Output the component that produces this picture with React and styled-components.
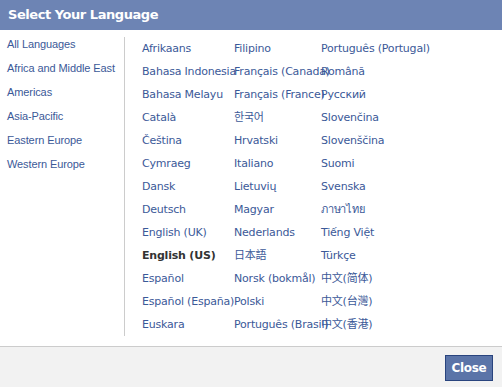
import React from "react";
import styled, { createGlobalStyle } from "styled-components";

const GlobalStyle = createGlobalStyle`
  html, body {
    margin: 0;
    padding: 0;
    background: #ffffff;
  }
  body {
    font-family: "Liberation Sans", Arial, sans-serif;
  }
`;

const Dialog = styled.div`
  width: 502px;
  height: 387px;
  display: flex;
  flex-direction: column;
  background: #ffffff;
  overflow: hidden;
`;

const Header = styled.div`
  height: 30px;
  background: #6d84b4;
  color: #ffffff;
  font-family: "DejaVu Sans", Verdana, sans-serif;
  font-weight: bold;
  font-size: 13px;
  line-height: 30px;
  padding-left: 8px;
  letter-spacing: -0.45px;
`;

const Body = styled.div`
  flex: 1;
  display: flex;
  padding-bottom: 9px;
`;

const Sidebar = styled.ul`
  list-style: none;
  margin: 0;
  padding: 2px 0 0 7px;
  width: 117px;
`;

const RegionItem = styled.li`
  font-size: 11px;
  line-height: 24px;
  color: #3b5998;
  white-space: nowrap;
  letter-spacing: -0.1px;
`;

const LanguageGrid = styled.div`
  margin-top: 7px;
  height: 299px;
  border-left: 1px solid #cccccc;
  padding-left: 17px;
  display: grid;
  grid-template-rows: repeat(13, 23px);
  grid-template-columns: 92px 87px 1fr;
  grid-auto-flow: column;
`;

const Language = styled.div`
  font-family: "DejaVu Sans", Verdana, "Noto Sans CJK SC", sans-serif;
  font-size: 11px;
  line-height: 23px;
  letter-spacing: -0.2px;
  white-space: nowrap;
  color: ${(p) => (p.$current ? "#333333" : "#3b5998")};
  font-weight: ${(p) => (p.$current ? "bold" : "normal")};
`;

const Footer = styled.div`
  height: 41px;
  border-top: 1px solid #cccccc;
  background: #f2f2f2;
  display: flex;
  justify-content: flex-end;
  align-items: flex-start;
  padding: 8px 9px 0 0;
  box-sizing: border-box;
`;

const CloseButton = styled.button`
  width: 48px;
  height: 26px;
  background: #5b74a8;
  border: 1px solid #29447e;
  color: #ffffff;
  font-family: "DejaVu Sans", Verdana, sans-serif;
  font-weight: bold;
  font-size: 12px;
  letter-spacing: -0.3px;
  padding: 0;
  cursor: pointer;
`;

const regions = [
  "All Languages",
  "Africa and Middle East",
  "Americas",
  "Asia-Pacific",
  "Eastern Europe",
  "Western Europe",
];

const languages = [
  "Afrikaans",
  "Bahasa Indonesia",
  "Bahasa Melayu",
  "Català",
  "Čeština",
  "Cymraeg",
  "Dansk",
  "Deutsch",
  "English (UK)",
  "English (US)",
  "Español",
  "Español (España)",
  "Euskara",
  "Filipino",
  "Français (Canada)",
  "Français (France)",
  "한국어",
  "Hrvatski",
  "Italiano",
  "Lietuvių",
  "Magyar",
  "Nederlands",
  "日本語",
  "Norsk (bokmål)",
  "Polski",
  "Português (Brasil)",
  "Português (Portugal)",
  "Română",
  "Русский",
  "Slovenčina",
  "Slovenščina",
  "Suomi",
  "Svenska",
  "ภาษาไทย",
  "Tiếng Việt",
  "Türkçe",
  "中文(简体)",
  "中文(台灣)",
  "中文(香港)",
];

export default function App() {
  return (
    <>
      <GlobalStyle />
      <Dialog>
        <Header>Select Your Language</Header>
        <Body>
          <Sidebar>
            {regions.map((r) => (
              <RegionItem key={r}>{r}</RegionItem>
            ))}
          </Sidebar>
          <LanguageGrid>
            {languages.map((l) => (
              <Language key={l} $current={l === "English (US)"}>
                {l}
              </Language>
            ))}
          </LanguageGrid>
        </Body>
        <Footer>
          <CloseButton>Close</CloseButton>
        </Footer>
      </Dialog>
    </>
  );
}
